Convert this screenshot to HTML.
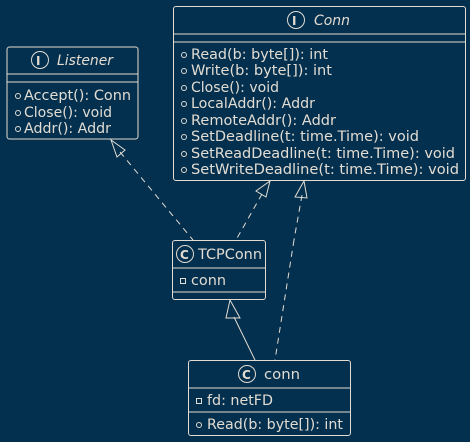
<!DOCTYPE html>
<html><head><style>
html,body{margin:0;padding:0;background:#04304f;}
svg{display:block;}
text{font-family:"DejaVu Sans","Liberation Sans",sans-serif;font-size:14px;fill:#e2dcd2;}
</style></head><body>
<svg width="470" height="442" viewBox="0 0 470 442" xmlns="http://www.w3.org/2000/svg">
<rect width="470" height="442" fill="#04304f"/>
<g fill="none" stroke="#e2dcd2" stroke-width="1">
<rect x="7" y="47" width="131" height="92" rx="2.5"/>
<line x1="7" y1="74" x2="138" y2="74"/><line x1="7" y1="82" x2="138" y2="82"/>
<circle cx="40" cy="60" r="8.5"/>
<rect x="173.5" y="6.5" width="292" height="174" rx="2.5"/>
<line x1="173.5" y1="34" x2="465.5" y2="34"/><line x1="173.5" y1="42" x2="465.5" y2="42"/>
<circle cx="296" cy="20" r="8.5"/>
<rect x="172.5" y="240.5" width="93" height="59" rx="2.5"/>
<line x1="172.5" y1="268" x2="265.5" y2="268"/><line x1="172.5" y1="292" x2="265.5" y2="292"/>
<circle cx="185" cy="254" r="8.5"/>
<rect x="188.5" y="360.5" width="162" height="75" rx="2.5"/>
<line x1="188.5" y1="388" x2="350.5" y2="388"/><line x1="188.5" y1="412" x2="350.5" y2="412"/>
<circle cx="247" cy="374" r="8.5"/>
<line x1="120" y1="152" x2="193" y2="240" stroke-dasharray="6,5"/>
<polygon points="111,140 117,157 125,150"/>
<line x1="262" y1="194" x2="236" y2="240" stroke-dasharray="6,5"/>
<polygon points="270,181 256,191 266,197"/>
<line x1="302" y1="195" x2="294" y2="240" stroke-dasharray="6,5"/>
<line x1="294" y1="240" x2="275" y2="360" stroke-dasharray="6,5"/>
<polygon points="304,181 295,197 307,198"/>
<line x1="234" y1="317" x2="255" y2="360"/>
<polygon points="230,300 226,318 240,318"/>
</g>
<g fill="none" stroke="#e2dcd2" stroke-width="1">
<circle cx="18" cy="96" r="2.5"/><circle cx="18" cy="113" r="2.5"/><circle cx="18" cy="129" r="2.5"/>
<circle cx="184" cy="55" r="2.5"/><circle cx="184" cy="71" r="2.5"/><circle cx="184" cy="88" r="2.5"/><circle cx="184" cy="104" r="2.5"/><circle cx="184" cy="121" r="2.5"/><circle cx="184" cy="137" r="2.5"/><circle cx="184" cy="154" r="2.5"/><circle cx="184" cy="170" r="2.5"/>
<rect x="180.5" y="278.5" width="5" height="5"/>
<rect x="196.5" y="398.5" width="5" height="5"/>
<circle cx="199" cy="425" r="2.5"/>
</g>
<g font-weight="bold">
<text x="36" y="65" style="font-size:12px">I</text>
<text x="292" y="25" style="font-size:12px">I</text>
<text x="180" y="259" style="font-size:12px">C</text>
<text x="242" y="379" style="font-size:12px">C</text>
</g>
<text x="57" y="65" font-style="italic" textLength="56" lengthAdjust="spacingAndGlyphs">Listener</text>
<text x="314" y="25" font-style="italic" textLength="36" lengthAdjust="spacingAndGlyphs">Conn</text>
<text x="198" y="259" textLength="64" lengthAdjust="spacingAndGlyphs">TCPConn</text>
<text x="264" y="379" textLength="36" lengthAdjust="spacingAndGlyphs">conn</text>
<text x="24" y="100" textLength="107" lengthAdjust="spacingAndGlyphs">Accept(): Conn</text>
<text x="24" y="117" textLength="88" lengthAdjust="spacingAndGlyphs">Close(): void</text>
<text x="24" y="133" textLength="87" lengthAdjust="spacingAndGlyphs">Addr(): Addr</text>
<text x="191" y="59" textLength="137" lengthAdjust="spacingAndGlyphs">Read(b: byte[]): int</text>
<text x="191" y="75" textLength="141" lengthAdjust="spacingAndGlyphs">Write(b: byte[]): int</text>
<text x="191" y="92" textLength="88" lengthAdjust="spacingAndGlyphs">Close(): void</text>
<text x="191" y="108" textLength="124" lengthAdjust="spacingAndGlyphs">LocalAddr(): Addr</text>
<text x="191" y="125" textLength="145" lengthAdjust="spacingAndGlyphs">RemoteAddr(): Addr</text>
<text x="191" y="141" textLength="228" lengthAdjust="spacingAndGlyphs">SetDeadline(t: time.Time): void</text>
<text x="191" y="158" textLength="264" lengthAdjust="spacingAndGlyphs">SetReadDeadline(t: time.Time): void</text>
<text x="191" y="174" textLength="268" lengthAdjust="spacingAndGlyphs">SetWriteDeadline(t: time.Time): void</text>
<text x="191" y="285" textLength="35" lengthAdjust="spacingAndGlyphs">conn</text>
<text x="207" y="405" textLength="66" lengthAdjust="spacingAndGlyphs">fd: netFD</text>
<text x="207" y="429" textLength="136" lengthAdjust="spacingAndGlyphs">Read(b: byte[]): int</text>
</svg>
</body></html>
